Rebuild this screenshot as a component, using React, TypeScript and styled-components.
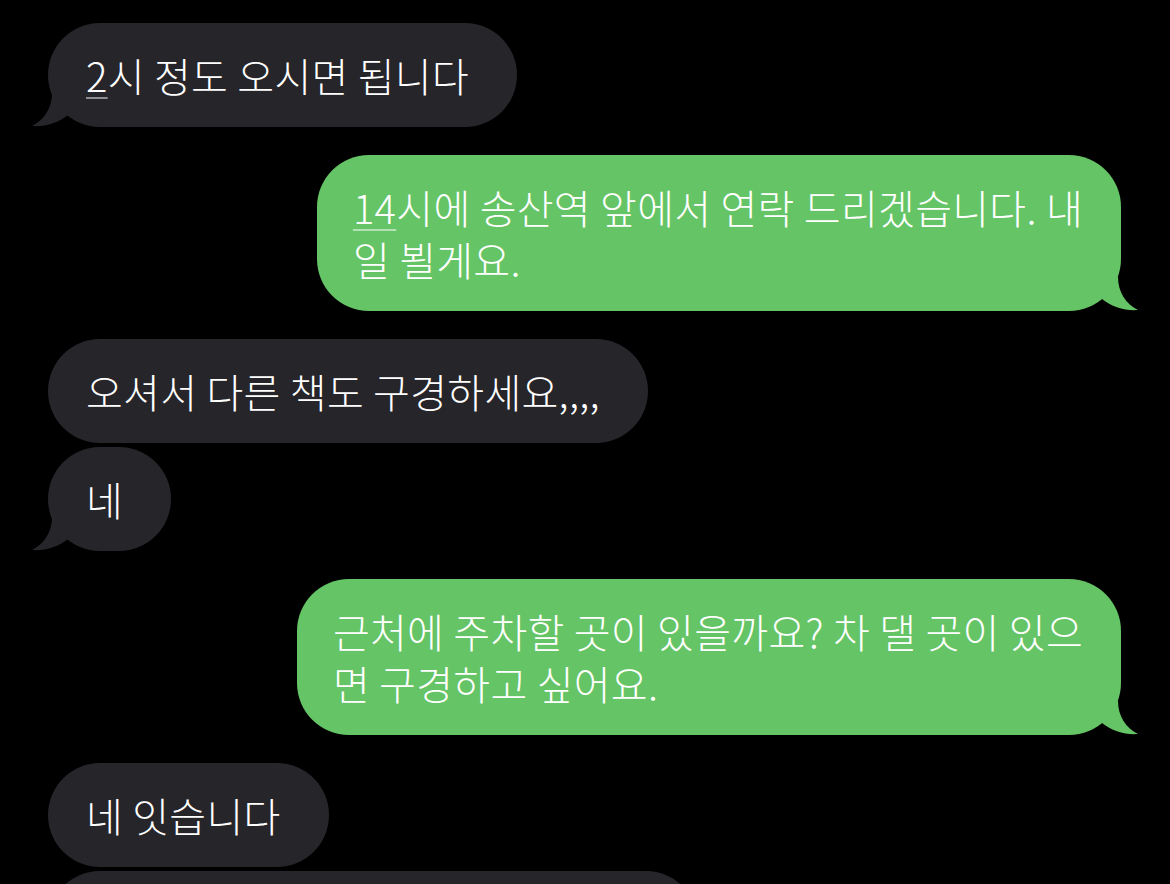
import styled, { createGlobalStyle } from "styled-components";

const GlobalStyle = createGlobalStyle`
  html, body {
    margin: 0;
    padding: 0;
    background: #000;
  }
  body {
    font-family: "Noto Sans CJK KR", "Noto Sans", sans-serif;
  }
`;

const GRAY = "#262529";
const GREEN = "#65c466";

const Thread = styled.div`
  width: 1170px;
  height: 884px;
  overflow: hidden;
  display: flex;
  flex-direction: column;
  padding-top: 23px;
  box-sizing: border-box;
  background: #000;
`;

const Row = styled.div<{ $sent?: boolean; $tight?: boolean }>`
  display: flex;
  justify-content: ${(p) => (p.$sent ? "flex-end" : "flex-start")};
  margin-top: ${(p) => (p.$tight ? "4px" : "28px")};
  padding: ${(p) => (p.$sent ? "0 49px 0 0" : "0 0 0 48px")};
  &:first-child {
    margin-top: 0;
  }
`;

const Bubble = styled.div<{ $sent?: boolean }>`
  position: relative;
  max-width: 827px;
  min-height: 52px;
  padding: ${(p) => (p.$sent ? "26px 38px 26px 36px" : "26px 48px 26px 38px")};
  border-radius: 52px;
  background: ${(p) => (p.$sent ? GREEN : GRAY)};
  color: #fff;
  font-size: 40px;
  font-weight: 300;
  line-height: 52px;
  letter-spacing: 0.3px;
  white-space: nowrap;
`;

const Line = styled.div`
  height: 52px;
`;

const Link = styled.span<{ $sent?: boolean }>`
  text-decoration: underline;
  text-decoration-thickness: 2px;
  text-underline-offset: 5px;
  text-decoration-color: ${(p) =>
    p.$sent ? "rgba(255,255,255,0.5)" : "#8d8d92"};
`;

const TailSvg = styled.svg<{ $sent?: boolean }>`
  position: absolute;
  bottom: 0;
  width: 40px;
  height: 34px;
  ${(p) =>
    p.$sent ? "right: -17px; transform: scaleX(-1);" : "left: -16px;"}
`;

const Tail = ({ sent }: { sent?: boolean }) => (
  <TailSvg $sent={sent} viewBox="0 0 40 34">
    <path
      d="M20 0 C20 15 12 27 0 33 C13 34 26 30 36 22 L40 0 Z"
      fill={sent ? GREEN : GRAY}
    />
  </TailSvg>
);

type Msg = {
  sent?: boolean;
  tight?: boolean;
  tail?: boolean;
  lines: React.ReactNode[];
  width?: number;
};

const messages: Msg[] = [
  {
    tail: true,
    lines: [
      <>
        <Link>2</Link>시 정도 오시면 됩니다
      </>,
    ],
  },
  {
    sent: true,
    tail: true,
    lines: [
      <>
        <Link $sent>14</Link>시에 송산역 앞에서 연락 드리겠습니다. 내
      </>,
      "일 뵐게요.",
    ],
  },
  { lines: ["오셔서 다른 책도 구경하세요,,,,"] },
  { tight: true, tail: true, lines: ["네"] },
  {
    sent: true,
    tail: true,
    lines: ["근처에 주차할 곳이 있을까요? 차 댈 곳이 있으", "면 구경하고 싶어요."],
  },
  { lines: ["네 잇습니다"] },
  { tight: true, lines: [""], width: 650 },
];

export default function App() {
  return (
    <>
      <GlobalStyle />
      <Thread>
        {messages.map((m, i) => (
          <Row key={i} $sent={m.sent} $tight={m.tight}>
            <Bubble
              $sent={m.sent}
              style={m.width ? { width: m.width, boxSizing: "border-box" } : undefined}
            >
              {m.lines.map((l, j) => (
                <Line key={j}>{l}</Line>
              ))}
              {m.tail && <Tail sent={m.sent} />}
            </Bubble>
          </Row>
        ))}
      </Thread>
    </>
  );
}
